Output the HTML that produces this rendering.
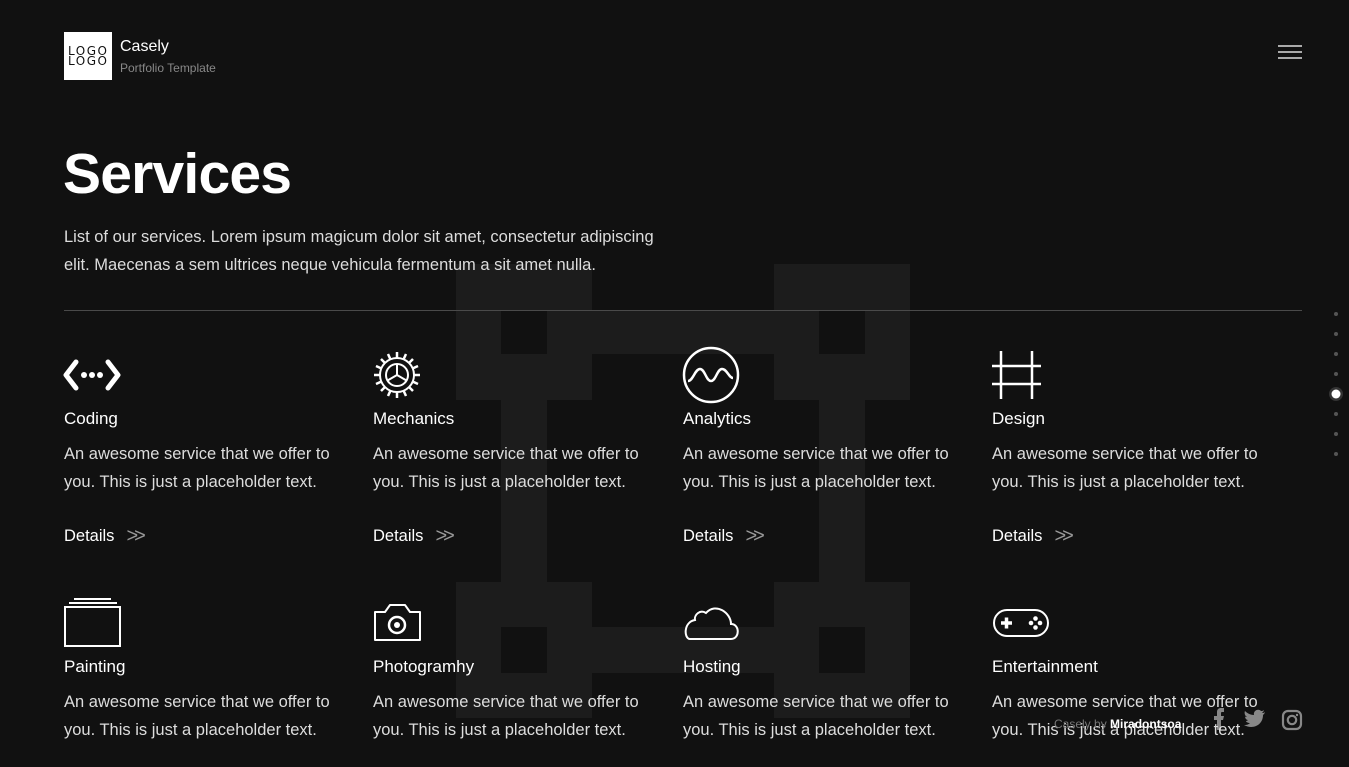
<!DOCTYPE html>
<html><head><meta charset="utf-8"><style>
*{margin:0;padding:0;box-sizing:border-box}
html,body{width:1349px;height:767px;overflow:hidden;background:#111;font-family:"Liberation Sans",sans-serif;color:#fff}
.abs{position:absolute}
.logo{left:64px;top:32px;width:48px;height:48px;background:#fff;color:#111;font-size:12px;line-height:10px;letter-spacing:1.5px;padding:14px 0 0 4px;font-family:"DejaVu Sans",sans-serif}
h1{position:absolute;left:63px;top:141px;font-size:57px;font-weight:bold;letter-spacing:-0.8px}
.intro{left:64px;top:223px;width:610px;font-size:16.5px;line-height:28px;color:#ddd}
.hr{left:64px;top:310px;width:1238px;height:1px;background:#4a4a4a}
.svc{position:absolute;width:290px}
.svc .t{position:absolute;top:0;font-size:17px}
.svc .d{position:absolute;top:31px;font-size:16.5px;line-height:28px;color:#ddd;width:290px}
.svc .l{position:absolute;top:115px;font-size:16.5px}
.svc .l span{color:#999;margin-left:12px;font-size:20px;position:relative;top:1px;letter-spacing:-4px}
.dot{position:absolute;left:1334px;width:4px;height:4px;border-radius:50%;background:#555}
</style></head><body>
<svg class="abs" style="left:0;top:0" width="1349" height="767">
<g fill="#1c1c1c">
<rect x="456" y="264" width="136" height="46"/><rect x="774" y="264" width="136" height="46"/>
<rect x="456" y="310" width="45" height="44"/><rect x="547" y="310" width="272" height="44"/><rect x="865" y="310" width="45" height="44"/>
<rect x="456" y="354" width="136" height="46"/><rect x="774" y="354" width="136" height="46"/>
<rect x="501" y="400" width="46" height="182"/><rect x="819" y="400" width="46" height="182"/>
<rect x="456" y="582" width="136" height="45"/><rect x="774" y="582" width="136" height="45"/>
<rect x="456" y="627" width="45" height="46"/><rect x="547" y="627" width="272" height="46"/><rect x="865" y="627" width="45" height="46"/>
<rect x="456" y="673" width="136" height="45"/><rect x="774" y="673" width="136" height="45"/>
</g>
<g stroke="#aaa" stroke-width="2"><line x1="1278" y1="46" x2="1302" y2="46"/><line x1="1278" y1="52" x2="1302" y2="52"/><line x1="1278" y1="58" x2="1302" y2="58"/></g>
<circle cx="1336" cy="394" r="7" fill="#333"/><circle cx="1336" cy="394" r="4.5" fill="#fff"/>
<g fill="none" stroke="#fff">
<path d="M76 362 L66 375 L76 388 M108 362 L118 375 L108 388" stroke-width="5" stroke-linecap="round" stroke-linejoin="round"/>
<g transform="translate(397,375)" stroke-width="2"><circle r="17"/><circle r="11"/><path d="M0 0V-11M0 0L9.5 5.5M0 0L-9.5 5.5"/><path d="M0 -23V-17M0 23V17M-23 0H-17M23 0H17M-16 -16L-12 -12M16 16L12 12M16 -16L12 -12M-16 16L-12 12M-9 -21L-6.5 -15.5M9 21L6.5 15.5M21 -9L15.5 -6.5M-21 9L-15.5 6.5M9 -21L6.5 -15.5M-9 21L-6.5 15.5M-21 -9L-15.5 -6.5M21 9L15.5 6.5" stroke-width="2.5"/></g>
<circle cx="711" cy="375" r="27" stroke-width="2.5"/>
<path d="M688 381 C693 381 695 369 700 369 C705 369 706 381 711 381 C716 381 717 369 722 369 C727 369 729 378 733 378" stroke-width="2.5"/>
<path d="M1001 351V399M1032 351V399M992 366H1041M992 384H1041" stroke-width="2.5"/>
<rect x="65" y="607" width="55" height="39" stroke-width="2"/>
<path d="M69 603H117M74 599H111" stroke-width="2"/>
<path d="M375 612H385L390 605H405L410 612H420V640H375Z" stroke-width="2" stroke-linejoin="round"/><circle cx="397" cy="625" r="8" stroke-width="2.5"/><circle cx="397" cy="625" r="3" fill="#fff" stroke="none"/>
<path d="M690 639H731C740 639 740 624 731 624C731 613 716 602 706 613C700 609 694 615 695 620C683 622 684 639 690 639Z" stroke-width="2"/>
<rect x="994" y="610" width="54" height="26" rx="13" stroke-width="2"/>
<path d="M1001 623H1012M1006.5 617.5V628.5" stroke-width="3.5"/>
</g>
<g fill="#fff"><circle cx="1031" cy="623" r="2.3"/><circle cx="1040" cy="623" r="2.3"/><circle cx="1035.5" cy="618.5" r="2.3"/><circle cx="1035.5" cy="627.5" r="2.3"/>
<circle cx="84" cy="375" r="3"/><circle cx="92" cy="375" r="3"/><circle cx="100" cy="375" r="3"/></g>
<g fill="#888"><path d="M1217 730V720H1214V716H1217V712C1217 709 1219 708 1221 708H1224V712H1222C1221 712 1221 713 1221 713V716H1224L1223 720H1221V730Z"/>
<path d="M1265 712C1264 713 1263 713 1262 713C1263 712 1264 711 1264 710C1263 711 1262 711 1261 711C1258 708 1253 711 1254 715C1250 715 1247 713 1245 711C1244 713 1245 716 1247 717C1246 717 1245 717 1245 716C1245 718 1246 720 1248 720C1247 721 1246 721 1246 721C1246 722 1248 723 1250 723C1248 725 1246 725 1244 725C1253 730 1263 725 1263 715C1264 714 1265 713 1265 712Z"/></g>
<g fill="none" stroke="#888" stroke-width="2.2"><rect x="1283" y="711" width="18" height="18" rx="5"/><circle cx="1292" cy="720" r="4.2"/></g><circle cx="1297" cy="715" r="1.2" fill="#888"/>
</svg>
<div class="abs logo">LOGO<br>LOGO</div>
<div class="abs" style="left:120px;top:38px;font-size:16px">Casely</div>
<div class="abs" style="left:120px;top:61px;font-size:12px;color:#888">Portfolio Template</div>
<h1>Services</h1>
<div class="abs intro">List of our services. Lorem ipsum magicum dolor sit amet, consectetur adipiscing elit. Maecenas a sem ultrices neque vehicula fermentum a sit amet nulla.</div>
<div class="abs hr"></div>
<div class="dot" style="top:312px"></div><div class="dot" style="top:332px"></div><div class="dot" style="top:352px"></div><div class="dot" style="top:372px"></div><div class="dot" style="top:412px"></div><div class="dot" style="top:432px"></div><div class="dot" style="top:452px"></div>

<div class="svc" style="left:64px;top:409px"><div class="t">Coding</div><div class="d">An awesome service that we offer to you. This is just a placeholder text.</div><div class="l">Details<span>&gt;&gt;</span></div></div>
<div class="svc" style="left:373px;top:409px"><div class="t">Mechanics</div><div class="d">An awesome service that we offer to you. This is just a placeholder text.</div><div class="l">Details<span>&gt;&gt;</span></div></div>
<div class="svc" style="left:683px;top:409px"><div class="t">Analytics</div><div class="d">An awesome service that we offer to you. This is just a placeholder text.</div><div class="l">Details<span>&gt;&gt;</span></div></div>
<div class="svc" style="left:992px;top:409px"><div class="t">Design</div><div class="d">An awesome service that we offer to you. This is just a placeholder text.</div><div class="l">Details<span>&gt;&gt;</span></div></div>
<div class="svc" style="left:64px;top:657px"><div class="t">Painting</div><div class="d">An awesome service that we offer to you. This is just a placeholder text.</div></div>
<div class="svc" style="left:373px;top:657px"><div class="t">Photogramhy</div><div class="d">An awesome service that we offer to you. This is just a placeholder text.</div></div>
<div class="svc" style="left:683px;top:657px"><div class="t">Hosting</div><div class="d">An awesome service that we offer to you. This is just a placeholder text.</div></div>
<div class="svc" style="left:992px;top:657px"><div class="t">Entertainment</div><div class="d">An awesome service that we offer to you. This is just a placeholder text.</div></div>
<div class="abs" style="left:1054px;top:717px;font-size:12px;color:#777">Casely by <b style="color:#fff">Miradontsoa</b></div>
</body></html>
